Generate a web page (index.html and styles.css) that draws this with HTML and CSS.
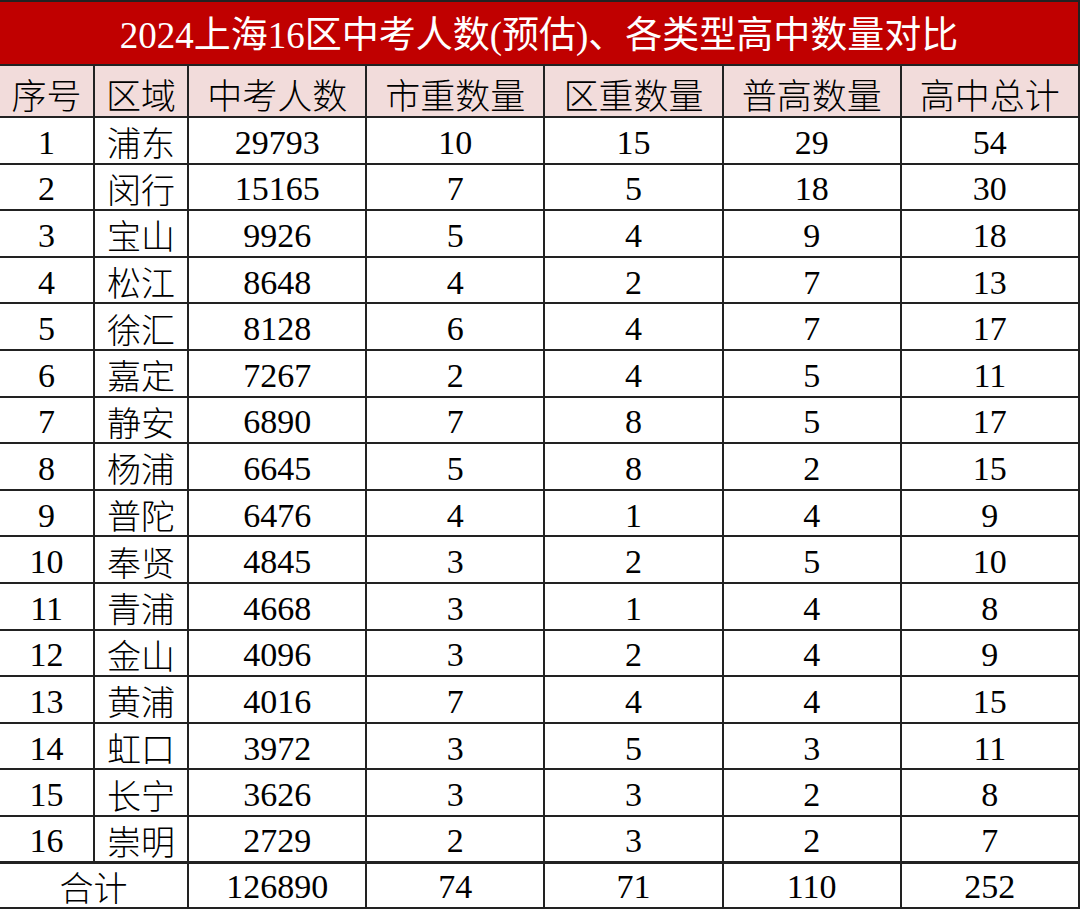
FILE: index.html
```html
<!DOCTYPE html>
<html lang="zh-CN">
<head>
<meta charset="utf-8">
<title>2024上海16区中考人数(预估)、各类型高中数量对比</title>
<link rel="stylesheet" href="styles.css">
</head>
<body>
<table class="sheet">
  <colgroup>
    <col class="c-narrow"><col class="c-narrow">
    <col class="c-wide"><col class="c-wide"><col class="c-wide"><col class="c-wide"><col class="c-wide">
  </colgroup>
  <thead>
    <tr class="title-row"><th colspan="7" class="title">2024上海16区中考人数(预估)、各类型高中数量对比</th></tr>
    <tr class="head-row">
      <th>序号</th><th>区域</th><th>中考人数</th><th>市重数量</th><th>区重数量</th><th>普高数量</th><th>高中总计</th>
    </tr>
  </thead>
  <tbody>
    <tr><td>1</td><td class="cn">浦东</td><td>29793</td><td>10</td><td>15</td><td>29</td><td>54</td></tr>
    <tr><td>2</td><td class="cn">闵行</td><td>15165</td><td>7</td><td>5</td><td>18</td><td>30</td></tr>
    <tr><td>3</td><td class="cn">宝山</td><td>9926</td><td>5</td><td>4</td><td>9</td><td>18</td></tr>
    <tr><td>4</td><td class="cn">松江</td><td>8648</td><td>4</td><td>2</td><td>7</td><td>13</td></tr>
    <tr><td>5</td><td class="cn">徐汇</td><td>8128</td><td>6</td><td>4</td><td>7</td><td>17</td></tr>
    <tr><td>6</td><td class="cn">嘉定</td><td>7267</td><td>2</td><td>4</td><td>5</td><td>11</td></tr>
    <tr><td>7</td><td class="cn">静安</td><td>6890</td><td>7</td><td>8</td><td>5</td><td>17</td></tr>
    <tr><td>8</td><td class="cn">杨浦</td><td>6645</td><td>5</td><td>8</td><td>2</td><td>15</td></tr>
    <tr><td>9</td><td class="cn">普陀</td><td>6476</td><td>4</td><td>1</td><td>4</td><td>9</td></tr>
    <tr><td>10</td><td class="cn">奉贤</td><td>4845</td><td>3</td><td>2</td><td>5</td><td>10</td></tr>
    <tr><td>11</td><td class="cn">青浦</td><td>4668</td><td>3</td><td>1</td><td>4</td><td>8</td></tr>
    <tr><td>12</td><td class="cn">金山</td><td>4096</td><td>3</td><td>2</td><td>4</td><td>9</td></tr>
    <tr><td>13</td><td class="cn">黄浦</td><td>4016</td><td>7</td><td>4</td><td>4</td><td>15</td></tr>
    <tr><td>14</td><td class="cn">虹口</td><td>3972</td><td>3</td><td>5</td><td>3</td><td>11</td></tr>
    <tr><td>15</td><td class="cn">长宁</td><td>3626</td><td>3</td><td>3</td><td>2</td><td>8</td></tr>
    <tr class="last-row"><td>16</td><td class="cn">崇明</td><td>2729</td><td>2</td><td>3</td><td>2</td><td>7</td></tr>
  </tbody>
  <tfoot>
    <tr class="total-row"><td colspan="2" class="cn">合计</td><td>126890</td><td>74</td><td>71</td><td>110</td><td>252</td></tr>
  </tfoot>
</table>
</body>
</html>
```
FILE: styles.css
```css
html, body {
  margin: 0;
  padding: 0;
  background: #ffffff;
}

.sheet {
  width: 1080px;
  table-layout: fixed;
  border-collapse: collapse;
  font-family: "Liberation Serif", "Noto Sans CJK SC", serif;
  color: #000;
}

.c-narrow { width: 94px; }
.c-wide { width: 178px; }

.sheet th,
.sheet td {
  border: 2px solid #222;
  text-align: center;
  vertical-align: middle;
  padding: 0;
  font-weight: normal;
  white-space: nowrap;
}

.title-row { height: 64px; }
.head-row { height: 52px; }
.sheet tbody tr { height: 46.6px; }
.total-row { height: 45px; }

.title-row th {
  background: #c00000;
  color: #ffffff;
  font-family: "Liberation Serif", "Noto Sans CJK SC", serif;
  font-size: 37px;
  line-height: 34px;
  padding-top: 6px;
  border-left-color: #c00000;
  border-top-color: #222;
}

.head-row th {
  background: #f2dcdb;
  font-family: "Noto Sans CJK SC", sans-serif;
  font-weight: 300;
  font-size: 35px;
  line-height: 34px;
  padding-top: 6px;
}

.sheet td {
  font-size: 34px;
  line-height: 32px;
  padding-top: 5px;
}

.sheet td.cn {
  font-family: "Noto Sans CJK SC", sans-serif;
  font-weight: 300;
  font-size: 34px;
  padding-top: 4px;
}

.total-row td {
  padding-top: 3px;
}

.sheet th:first-child,
.sheet td:first-child {
  border-left: none;
}

.last-row td {
  border-bottom-width: 3px;
}
```
